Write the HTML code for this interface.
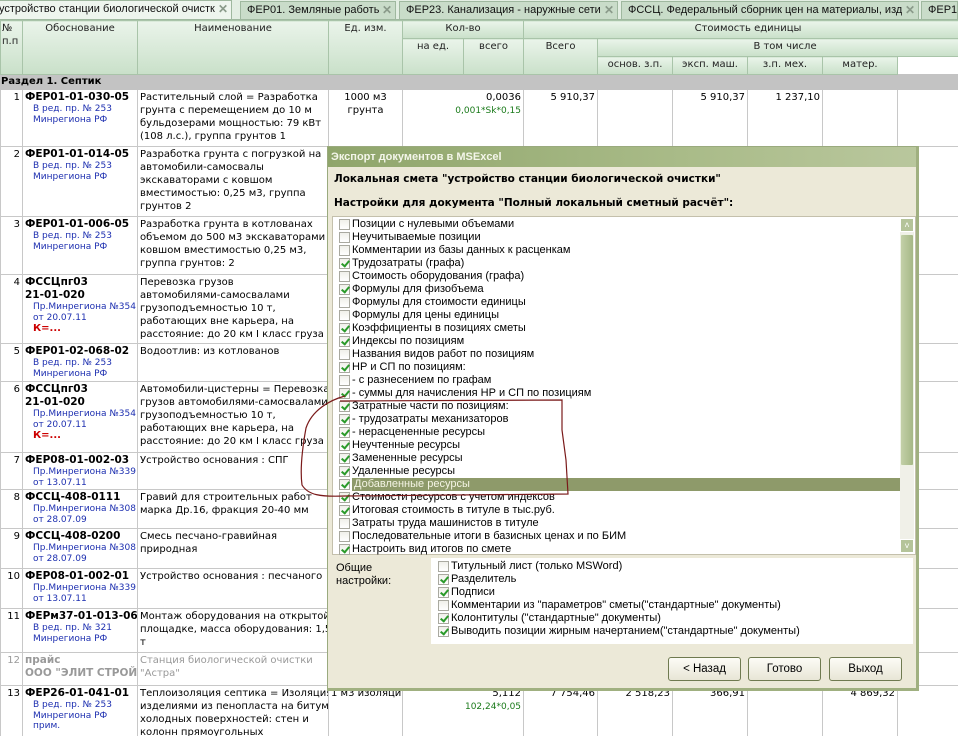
<!DOCTYPE html>
<html><head><meta charset="utf-8"><style>
*{margin:0;padding:0;box-sizing:border-box}
body{width:958px;height:736px;overflow:hidden;background:#fff;position:relative;font-family:"DejaVu Sans","Liberation Sans",sans-serif;font-size:10px;color:#000}
.tabs{position:absolute;left:0;top:0;width:958px;height:20px;background:#e3eee3;border-bottom:1px solid #9fb89f;overflow:hidden}
.tab{position:absolute;top:1px;height:19px;border:1px solid #9fb89f;background:#c9dcc9;font-family:"Liberation Sans",sans-serif;font-size:11px;line-height:17px;padding-left:6px;white-space:nowrap;overflow:hidden;color:#111}
.tab b{position:absolute;right:0;top:0;width:16px;text-align:center;color:#8a9a8a;font-size:12px;background:inherit}
.tab.act{background:#eef5ee;border-bottom:none;top:0;height:20px;padding-left:0}
.wrap{position:absolute;left:0;top:20px;width:958px;height:716px;overflow:hidden}
table{border-collapse:collapse;table-layout:fixed;width:958px}
td{border:1px solid #c8c8c8;vertical-align:top;padding:1px 2px 0;line-height:13px;overflow:hidden;white-space:nowrap}
thead td{background:linear-gradient(#eaf4ea,#c9e0c9);border-color:#a9c4a9;text-align:center;vertical-align:top;font-size:10px;color:#222;padding:1px 1px}
.sec td{background:#c3c3c3;font-weight:bold;height:15px;padding:0;line-height:14px;border-color:#c3c3c3}
.n{text-align:right}
.c b{font-weight:bold;font-size:10.5px}
.c i{font-style:normal;color:#1d2fb0;font-size:9px;display:block;line-height:10.5px;padding-left:8px}
.c em{font-style:normal;color:#c00;font-weight:bold;padding-left:8px;line-height:12px;display:block}
.g{color:#1a7a1a;font-size:9px}
.gr{color:#999}
.dlg{position:absolute;left:327px;top:146px;width:592px;height:545px;background:#ece9d8;border:1px solid #9aaa7e;border-right:3px solid #a0b080;border-bottom:3px solid #a0b080;font-family:"Liberation Sans",sans-serif;font-size:11px}
.ttl{height:20px;background:linear-gradient(90deg,#8fa56b,#a9bb88 60%,#b9c79d);color:#f4f6ea;font-weight:bold;line-height:20px;padding-left:3px;font-size:11px}
.lbl{position:absolute;left:6px;font-weight:bold;font-family:"DejaVu Sans",sans-serif;font-size:10.5px}
.list{position:absolute;left:4px;top:69px;width:584px;height:339px;background:#fff;border:1px solid #c4c0ac}
.it{position:absolute;left:3px;height:13px;line-height:13px;white-space:nowrap;padding-left:16px}
.cb{position:absolute;left:3px;top:1px;width:11px;height:11px;border:1px solid #a9a9a0;background:linear-gradient(#f0f0ea,#fff)}
.cb.k::after{content:"";position:absolute;left:3px;top:0px;width:3px;height:6px;border:solid #2a9a2a;border-width:0 2px 2px 0;transform:rotate(40deg)}
.sel{background:#8e9a6a;color:#f4f4e4;left:16px;padding-left:2px;width:550px}
.sb{position:absolute;right:1px;top:1px;width:14px;height:335px;background:#f0f0e8}
.btn{position:absolute;top:510px;width:73px;height:24px;border:1px solid #6f7a50;border-radius:3px;background:linear-gradient(#fcfcf6,#e8e6d6);text-align:center;line-height:22px;font-size:11.5px}
</style></head><body>
<div class="tabs">
<div class="tab act" style="left:-2px;width:234px">устройство станции биологической очистки<b>✕</b></div>
<div class="tab" style="left:240px;width:156px">ФЕР01. Земляные работы<b>✕</b></div>
<div class="tab" style="left:399px;width:219px">ФЕР23. Канализация - наружные сети<b>✕</b></div>
<div class="tab" style="left:621px;width:298px">ФССЦ. Федеральный сборник цен на материалы, изд<b>✕</b></div>
<div class="tab" style="left:921px;width:37px">ФЕР15</div>
</div>
<div class="wrap">
<table>
<colgroup><col style="width:22px"><col style="width:115px"><col style="width:191px"><col style="width:74px"><col style="width:61px"><col style="width:60px"><col style="width:74px"><col style="width:75px"><col style="width:75px"><col style="width:75px"><col style="width:75px"><col style="width:75px"><col style="width:61px"></colgroup>
<thead>
<tr style="height:18px"><td rowspan="3" style="text-align:left">№<br>п.п</td><td rowspan="3">Обоснование</td><td rowspan="3">Наименование</td><td rowspan="3">Ед. изм.</td><td colspan="2">Кол-во</td><td colspan="6">Стоимость единицы</td><td rowspan="3">Всего</td></tr>
<tr style="height:18px"><td rowspan="2">на ед.</td><td rowspan="2">всего</td><td rowspan="2">Всего</td><td colspan="5">В том числе</td></tr>
<tr style="height:18px"><td>основ. з.п.</td><td>эксп. маш.</td><td>з.п. мех.</td><td>матер.</td></tr>
</thead>
<tbody>
<tr class="sec"><td colspan="13">Раздел 1. Септик</td></tr>
<tr style="height:57px"><td class="n">1</td><td class="c"><b>ФЕР01-01-030-05</b><i>В ред. пр. № 253<br>Минрегиона РФ</i></td><td>Растительный слой = Разработка<br>грунта с перемещением до 10 м<br>бульдозерами мощностью: 79 кВт<br>(108 л.с.), группа грунтов 1</td><td style="text-align:center">1000 м3<br>грунта</td><td colspan="2" class="n">0,0036<br><span class="g">0,001*Sk*0,15</span></td><td class="n">5 910,37</td><td></td><td class="n">5 910,37</td><td class="n">1 237,10</td><td></td><td></td><td></td></tr>
<tr style="height:70px"><td class="n">2</td><td class="c"><b>ФЕР01-01-014-05</b><i>В ред. пр. № 253<br>Минрегиона РФ</i></td><td>Разработка грунта с погрузкой на<br>автомобили-самосвалы<br>экскаваторами с ковшом<br>вместимостью: 0,25 м3, группа<br>грунтов 2</td><td></td><td></td><td></td><td></td><td></td><td></td><td></td><td></td><td></td><td class="n">1</td></tr>
<tr style="height:58px"><td class="n">3</td><td class="c"><b>ФЕР01-01-006-05</b><i>В ред. пр. № 253<br>Минрегиона РФ</i></td><td>Разработка грунта в котлованах<br>объемом до 500 м3 экскаваторами с<br>ковшом вместимостью 0,25 м3,<br>группа грунтов: 2</td><td></td><td></td><td></td><td></td><td></td><td></td><td></td><td></td><td></td><td class="n">1</td></tr>
<tr style="height:69px"><td class="n">4</td><td class="c"><b>ФССЦпг03<br>21-01-020</b><i>Пр.Минрегиона №354<br>от 20.07.11</i><em>К=...</em></td><td>Перевозка грузов<br>автомобилями-самосвалами<br>грузоподъемностью 10 т,<br>работающих вне карьера, на<br>расстояние: до 20 км I класс груза</td><td></td><td></td><td></td><td></td><td></td><td></td><td></td><td></td><td></td><td class="n">6</td></tr>
<tr style="height:38px"><td class="n">5</td><td class="c"><b>ФЕР01-02-068-02</b><i>В ред. пр. № 253<br>Минрегиона РФ</i></td><td>Водоотлив: из котлованов</td><td></td><td></td><td></td><td></td><td></td><td></td><td></td><td></td><td></td><td class="n">13</td></tr>
<tr style="height:71px"><td class="n">6</td><td class="c"><b>ФССЦпг03<br>21-01-020</b><i>Пр.Минрегиона №354<br>от 20.07.11</i><em>К=...</em></td><td>Автомобили-цистерны = Перевозка<br>грузов автомобилями-самосвалами<br>грузоподъемностью 10 т,<br>работающих вне карьера, на<br>расстояние: до 20 км I класс груза</td><td></td><td></td><td></td><td></td><td></td><td></td><td></td><td></td><td></td><td class="n">13</td></tr>
<tr style="height:37px"><td class="n">7</td><td class="c"><b>ФЕР08-01-002-03</b><i>Пр.Минрегиона №339<br>от 13.07.11</i></td><td>Устройство основания : СПГ</td><td></td><td></td><td></td><td></td><td></td><td></td><td></td><td></td><td></td><td class="n">10</td></tr>
<tr style="height:39px"><td class="n">8</td><td class="c"><b>ФССЦ-408-0111</b><i>Пр.Минрегиона №308<br>от 28.07.09</i></td><td>Гравий для строительных работ<br>марка Др.16, фракция 20-40 мм</td><td></td><td></td><td></td><td></td><td></td><td></td><td></td><td></td><td></td><td class="n">-7</td></tr>
<tr style="height:40px"><td class="n">9</td><td class="c"><b>ФССЦ-408-0200</b><i>Пр.Минрегиона №308<br>от 28.07.09</i></td><td>Смесь песчано-гравийная<br>природная</td><td></td><td></td><td></td><td></td><td></td><td></td><td></td><td></td><td></td><td class="n">5</td></tr>
<tr style="height:40px"><td class="n">10</td><td class="c"><b>ФЕР08-01-002-01</b><i>Пр.Минрегиона №339<br>от 13.07.11</i></td><td>Устройство основания : песчаного</td><td></td><td></td><td></td><td></td><td></td><td></td><td></td><td></td><td></td><td class="n">16</td></tr>
<tr style="height:44px"><td class="n">11</td><td class="c"><b>ФЕРм37-01-013-06</b><i>В ред. пр. № 321<br>Минрегиона РФ</i></td><td>Монтаж оборудования на открытой<br>площадке, масса оборудования: 1,5<br>т</td><td></td><td></td><td></td><td></td><td></td><td></td><td></td><td></td><td></td><td class="n">13</td></tr>
<tr style="height:33px" class="gr"><td class="n">12</td><td class="c"><b>прайс<br>ООО "ЭЛИТ СТРОЙ И</b></td><td>Станция биологической очистки<br>"Астра"</td><td></td><td></td><td></td><td></td><td></td><td></td><td></td><td></td><td></td><td class="n">60</td></tr>
<tr style="height:60px"><td class="n">13</td><td class="c"><b>ФЕР26-01-041-01</b><i>В ред. пр. № 253<br>Минрегиона РФ<br>прим.</i></td><td>Теплоизоляция септика = Изоляция<br>изделиями из пенопласта на битуме<br>холодных поверхностей: стен и<br>колонн прямоугольных</td><td>1 м3 изоляции</td><td colspan="2" class="n">5,112<br><span class="g">102,24*0,05</span></td><td class="n">7 754,46</td><td class="n">2 518,23</td><td class="n">366,91</td><td></td><td class="n">4 869,32</td><td></td><td class="n">39</td></tr>
</tbody></table>
</div>

<div class="dlg">
<div class="ttl">Экспорт документов в MSExcel</div>
<div class="lbl" style="top:26px">Локальная смета "устройство станции биологической очистки"</div>
<div class="lbl" style="top:50px">Настройки для документа "Полный локальный сметный расчёт":</div>
<div class="list">
<div class="it" style="top:1px"><span class="cb"></span>Позиции с нулевыми объемами</div>
<div class="it" style="top:14px"><span class="cb"></span>Неучитываемые позиции</div>
<div class="it" style="top:27px"><span class="cb"></span>Комментарии из базы данных к расценкам</div>
<div class="it" style="top:40px"><span class="cb k"></span>Трудозатраты (графа)</div>
<div class="it" style="top:53px"><span class="cb"></span>Стоимость оборудования (графа)</div>
<div class="it" style="top:66px"><span class="cb k"></span>Формулы для физобъема</div>
<div class="it" style="top:79px"><span class="cb"></span>Формулы для стоимости единицы</div>
<div class="it" style="top:92px"><span class="cb"></span>Формулы для цены единицы</div>
<div class="it" style="top:105px"><span class="cb k"></span>Коэффициенты в позициях сметы</div>
<div class="it" style="top:118px"><span class="cb k"></span>Индексы по позициям</div>
<div class="it" style="top:131px"><span class="cb"></span>Названия видов работ по позициям</div>
<div class="it" style="top:144px"><span class="cb k"></span>НР и СП по позициям:</div>
<div class="it" style="top:157px"><span class="cb"></span>- с разнесением по графам</div>
<div class="it" style="top:170px"><span class="cb k"></span>- суммы для начисления НР и СП по позициям</div>
<div class="it" style="top:183px"><span class="cb k"></span>Затратные части по позициям:</div>
<div class="it" style="top:196px"><span class="cb k"></span>- трудозатраты механизаторов</div>
<div class="it" style="top:209px"><span class="cb k"></span>- нерасцененные ресурсы</div>
<div class="it" style="top:222px"><span class="cb k"></span>Неучтенные ресурсы</div>
<div class="it" style="top:235px"><span class="cb k"></span>Замененные ресурсы</div>
<div class="it" style="top:248px"><span class="cb k"></span>Удаленные ресурсы</div>
<div class="it" style="top:261px;padding-left:0;width:566px"><span class="cb k"></span><span class="it sel" style="top:0">Добавленные ресурсы</span></div>
<div class="it" style="top:274px"><span class="cb k"></span>Стоимости ресурсов с учетом индексов</div>
<div class="it" style="top:287px"><span class="cb k"></span>Итоговая стоимость в титуле в тыс.руб.</div>
<div class="it" style="top:300px"><span class="cb"></span>Затраты труда машинистов в титуле</div>
<div class="it" style="top:313px"><span class="cb"></span>Последовательные итоги в базисных ценах и по БИМ</div>
<div class="it" style="top:326px"><span class="cb k"></span>Настроить вид итогов по смете</div>
<div class="sb">
<div style="position:absolute;top:0;left:0;width:14px;height:14px;background:#b5c49a;border:1px solid #fff;color:#fff;font-size:9px;text-align:center;line-height:12px">˄</div>
<div style="position:absolute;top:16px;left:0;width:14px;height:232px;background:linear-gradient(90deg,#c3d0a8,#a6b886);border:1px solid #eef2e4;border-radius:2px"></div>
<div style="position:absolute;bottom:0;left:0;width:14px;height:14px;background:#b5c49a;border:1px solid #fff;color:#fff;font-size:9px;text-align:center;line-height:12px">˅</div>
</div>
</div>
<div style="position:absolute;left:8px;top:415px;line-height:13px">Общие<br>настройки:</div>
<div style="position:absolute;left:103px;top:411px;width:482px;height:86px;background:#fff">
<div class="it" style="top:2px;left:4px"><span class="cb"></span>Титульный лист (только MSWord)</div>
<div class="it" style="top:15px;left:4px"><span class="cb k"></span>Разделитель</div>
<div class="it" style="top:28px;left:4px"><span class="cb k"></span>Подписи</div>
<div class="it" style="top:41px;left:4px"><span class="cb"></span>Комментарии из "параметров" сметы("стандартные" документы)</div>
<div class="it" style="top:54px;left:4px"><span class="cb k"></span>Колонтитулы ("стандартные" документы)</div>
<div class="it" style="top:67px;left:4px"><span class="cb k"></span>Выводить позиции жирным начертанием("стандартные" документы)</div>
</div>
<div class="btn" style="left:340px">&lt; Назад</div>
<div class="btn" style="left:420px">Готово</div>
<div class="btn" style="left:501px">Выход</div>
</div>
<svg style="position:absolute;left:0;top:0" width="958" height="736"><path d="M345,396 C330,400 312,410 306,428 C302,450 300,470 302,485 C308,495 320,497 345,496 L568,494 L566,460 L562,430 L562,400 L340,401" fill="none" stroke="#7a1a1a" stroke-width="1.2"/></svg>
</body></html>
